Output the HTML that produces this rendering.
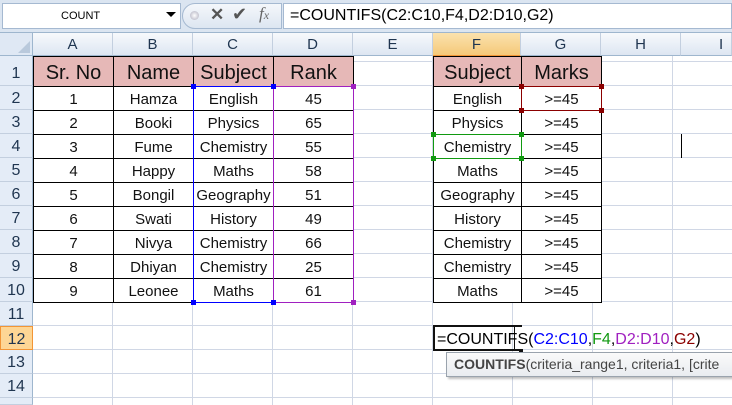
<!DOCTYPE html>
<html><head><meta charset="utf-8"><style>
*{margin:0;padding:0;box-sizing:border-box}
html,body{width:732px;height:405px;overflow:hidden}
body{background:#fff;font-family:"Liberation Sans",Arial,sans-serif;position:relative}
.a{position:absolute}
#fb{left:0;top:0;width:732px;height:33px;background:#dbe5f1;border-bottom:1px solid #9eb6ce}
#nb{left:2px;top:3px;width:179px;height:26px;background:#fff;border:1px solid #a5b9d1;font-size:11px;line-height:24px;padding-left:58px;color:#000}
#pill{left:182px;top:3px;width:100px;height:26px;background:linear-gradient(#f4f7fb,#dde6f1);border:1px solid #a5b9d1;border-radius:13px 0 0 13px}
#fx{left:283px;top:3px;width:449px;height:26px;background:#fff;border:1px solid #a5b9d1;font-size:16px;line-height:24px;padding-left:6px;color:#000}
.ch{top:33px;height:23px;background:linear-gradient(#f7f9fc,#dde6f2);border-right:1px solid #c3cfdf;border-bottom:1px solid #9eb6ce;font-size:15px;line-height:23px;text-align:center;color:#1f3550}
.rh{left:0;width:33px;height:24px;background:#e4ecf7;border-right:1px solid #9eb6ce;border-bottom:1px solid #c3cfdf;font-size:16px;line-height:25px;text-align:center;color:#1f3550}
#grid{left:33px;top:56px;width:699px;height:349px;
background-image:linear-gradient(to right,#d0d7e5 1px,transparent 1px),linear-gradient(#d0d7e5 1px,transparent 1px);
background-size:80px 24px,80px 24px;background-position:-1px 6px,0 5px}
table{position:absolute;border-collapse:collapse;background:#fff}
td{border:1px solid #000;text-align:center;font-size:15px;color:#111;height:24px;padding:2px 0 0 0;white-space:nowrap}
tr.h td{background:#e6b8b7;font-size:20px;height:30px;padding-top:4px}
.sel{position:absolute;border:1px solid}
.sq{position:absolute;width:5px;height:5px}
</style></head><body>
<div class="a" id="fb"></div>
<div class="a" id="nb">COUNT</div>
<div class="a" style="left:166px;top:12px;width:0;height:0;border-left:5px solid transparent;border-right:5px solid transparent;border-top:5px solid #000"></div>
<div class="a" id="pill"></div>
<div class="a" style="left:190px;top:11px;width:9px;height:9px;border-radius:50%;background:radial-gradient(#fff,#aab)"></div>
<div class="a" style="left:210px;top:5px;font-size:17px;color:#555;font-weight:bold">✕</div>
<div class="a" style="left:232px;top:4px;font-size:18px;color:#555">✔</div>
<div class="a" style="left:259px;top:4px;font-size:17px;color:#666;font-style:italic;font-family:'Liberation Serif',serif">f<span style="font-size:12px">x</span></div>
<div class="a" id="fx">=COUNTIFS(C2:C10,F4,D2:D10,G2)</div>

<div class="a" style="left:0;top:33px;width:33px;height:23px;background:#dfe8f4;border-right:1px solid #9eb6ce;border-bottom:1px solid #9eb6ce"></div>
<div class="a" style="left:18px;top:41px;width:0;height:0;border-left:12px solid transparent;border-bottom:12px solid #b9c9dc"></div>
<div class="a ch" style="left:33px;width:80px">A</div>
<div class="a ch" style="left:113px;width:80px">B</div>
<div class="a ch" style="left:193px;width:80px">C</div>
<div class="a ch" style="left:273px;width:80px">D</div>
<div class="a ch" style="left:353px;width:80px">E</div>
<div class="a ch" style="left:433px;width:88px;background:linear-gradient(#fbe2ae,#f5c979);border-bottom-color:#f29536">F</div>
<div class="a ch" style="left:521px;width:80px">G</div>
<div class="a ch" style="left:601px;width:80px">H</div>
<div class="a ch" style="left:681px;width:51px;text-align:left;padding-left:38px">I</div>

<div class="a rh" style="top:56px;height:30px;line-height:36px">1</div>
<div class="a rh" style="top:86px">2</div>
<div class="a rh" style="top:110px">3</div>
<div class="a rh" style="top:134px">4</div>
<div class="a rh" style="top:158px">5</div>
<div class="a rh" style="top:182px">6</div>
<div class="a rh" style="top:206px">7</div>
<div class="a rh" style="top:230px">8</div>
<div class="a rh" style="top:254px">9</div>
<div class="a rh" style="top:278px">10</div>
<div class="a rh" style="top:302px">11</div>
<div class="a rh" style="top:326px;background:#fdd695;border:1px solid #f29536">12</div>
<div class="a rh" style="top:350px">13</div>
<div class="a rh" style="top:374px">14</div>
<div class="a rh" style="top:398px;height:7px"></div>

<div class="a" id="grid"></div>

<table style="left:33px;top:56px;width:321px">
<colgroup><col style="width:80px"><col style="width:80px"><col style="width:80px"><col style="width:80px"></colgroup>
<tr class="h"><td>Sr. No</td><td>Name</td><td>Subject</td><td>Rank</td></tr>
<tr><td>1</td><td>Hamza</td><td>English</td><td>45</td></tr>
<tr><td>2</td><td>Booki</td><td>Physics</td><td>65</td></tr>
<tr><td>3</td><td>Fume</td><td>Chemistry</td><td>55</td></tr>
<tr><td>4</td><td>Happy</td><td>Maths</td><td>58</td></tr>
<tr><td>5</td><td>Bongil</td><td>Geography</td><td>51</td></tr>
<tr><td>6</td><td>Swati</td><td>History</td><td>49</td></tr>
<tr><td>7</td><td>Nivya</td><td>Chemistry</td><td>66</td></tr>
<tr><td>8</td><td>Dhiyan</td><td>Chemistry</td><td>25</td></tr>
<tr><td>9</td><td>Leonee</td><td>Maths</td><td>61</td></tr>
</table>

<table style="left:433px;top:56px;width:169px">
<colgroup><col style="width:88px"><col style="width:80px"></colgroup>
<tr class="h"><td>Subject</td><td>Marks</td></tr>
<tr><td>English</td><td>&gt;=45</td></tr>
<tr><td>Physics</td><td>&gt;=45</td></tr>
<tr><td>Chemistry</td><td>&gt;=45</td></tr>
<tr><td>Maths</td><td>&gt;=45</td></tr>
<tr><td>Geography</td><td>&gt;=45</td></tr>
<tr><td>History</td><td>&gt;=45</td></tr>
<tr><td>Chemistry</td><td>&gt;=45</td></tr>
<tr><td>Chemistry</td><td>&gt;=45</td></tr>
<tr><td>Maths</td><td>&gt;=45</td></tr>
</table>

<div class="sel" style="left:193px;top:86px;width:81px;height:217px;border-color:#0000ff"></div>
<div class="sel" style="left:273px;top:86px;width:81px;height:217px;border-color:#a020c0"></div>
<div class="sq" style="left:191px;top:84px;background:#00f"></div>
<div class="sq" style="left:271px;top:84px;background:#00f"></div>
<div class="sq" style="left:191px;top:300px;background:#00f"></div>
<div class="sq" style="left:271px;top:300px;background:#00f"></div>
<div class="sq" style="left:351px;top:84px;background:#a020c0"></div>
<div class="sq" style="left:351px;top:300px;background:#a020c0"></div>
<div class="sel" style="left:521px;top:86px;width:81px;height:25px;border-color:#8b0000"></div>
<div class="sq" style="left:519px;top:84px;background:#8b0000"></div>
<div class="sq" style="left:599px;top:84px;background:#8b0000"></div>
<div class="sq" style="left:519px;top:108px;background:#8b0000"></div>
<div class="sq" style="left:599px;top:108px;background:#8b0000"></div>
<div class="sel" style="left:433px;top:134px;width:89px;height:25px;border-color:#119911"></div>
<div class="sq" style="left:431px;top:132px;background:#119911"></div>
<div class="sq" style="left:519px;top:132px;background:#119911"></div>
<div class="sq" style="left:431px;top:156px;background:#119911"></div>
<div class="sq" style="left:519px;top:156px;background:#119911"></div>
<div class="a" style="left:681px;top:134px;width:1px;height:24px;background:#000"></div>

<div class="a" style="left:433px;top:325px;width:89px;height:26px;border:2px solid #111;border-right:none"></div>
<div class="a" style="left:514px;top:325px;width:8px;height:2px;background:#111"></div>
<div class="a" style="left:514px;top:325px;width:1px;height:26px;background:#111"></div>
<div class="a" style="left:519px;top:349px;width:4px;height:4px;background:#111"></div>
<div class="a" style="left:437px;top:331px;font-size:16px;white-space:nowrap;color:#000">=COUNTIFS(<span style="color:#0000ff">C2:C10</span>,<span style="color:#119911">F4</span>,<span style="color:#a020c0">D2:D10</span>,<span style="color:#8b0000">G2</span>)</div>

<div class="a" style="left:446px;top:352px;width:286px;height:25px;overflow:hidden;background:linear-gradient(#fafafa,#e9ecf0);border:1px solid #9aa3ad;border-right:none;box-shadow:2px 2px 2px rgba(0,0,0,.25);font-size:14px;line-height:23px;padding-left:7px;color:#444;white-space:nowrap"><b>COUNTIFS</b>(criteria_range1, criteria1, [crite</div>
</body></html>
